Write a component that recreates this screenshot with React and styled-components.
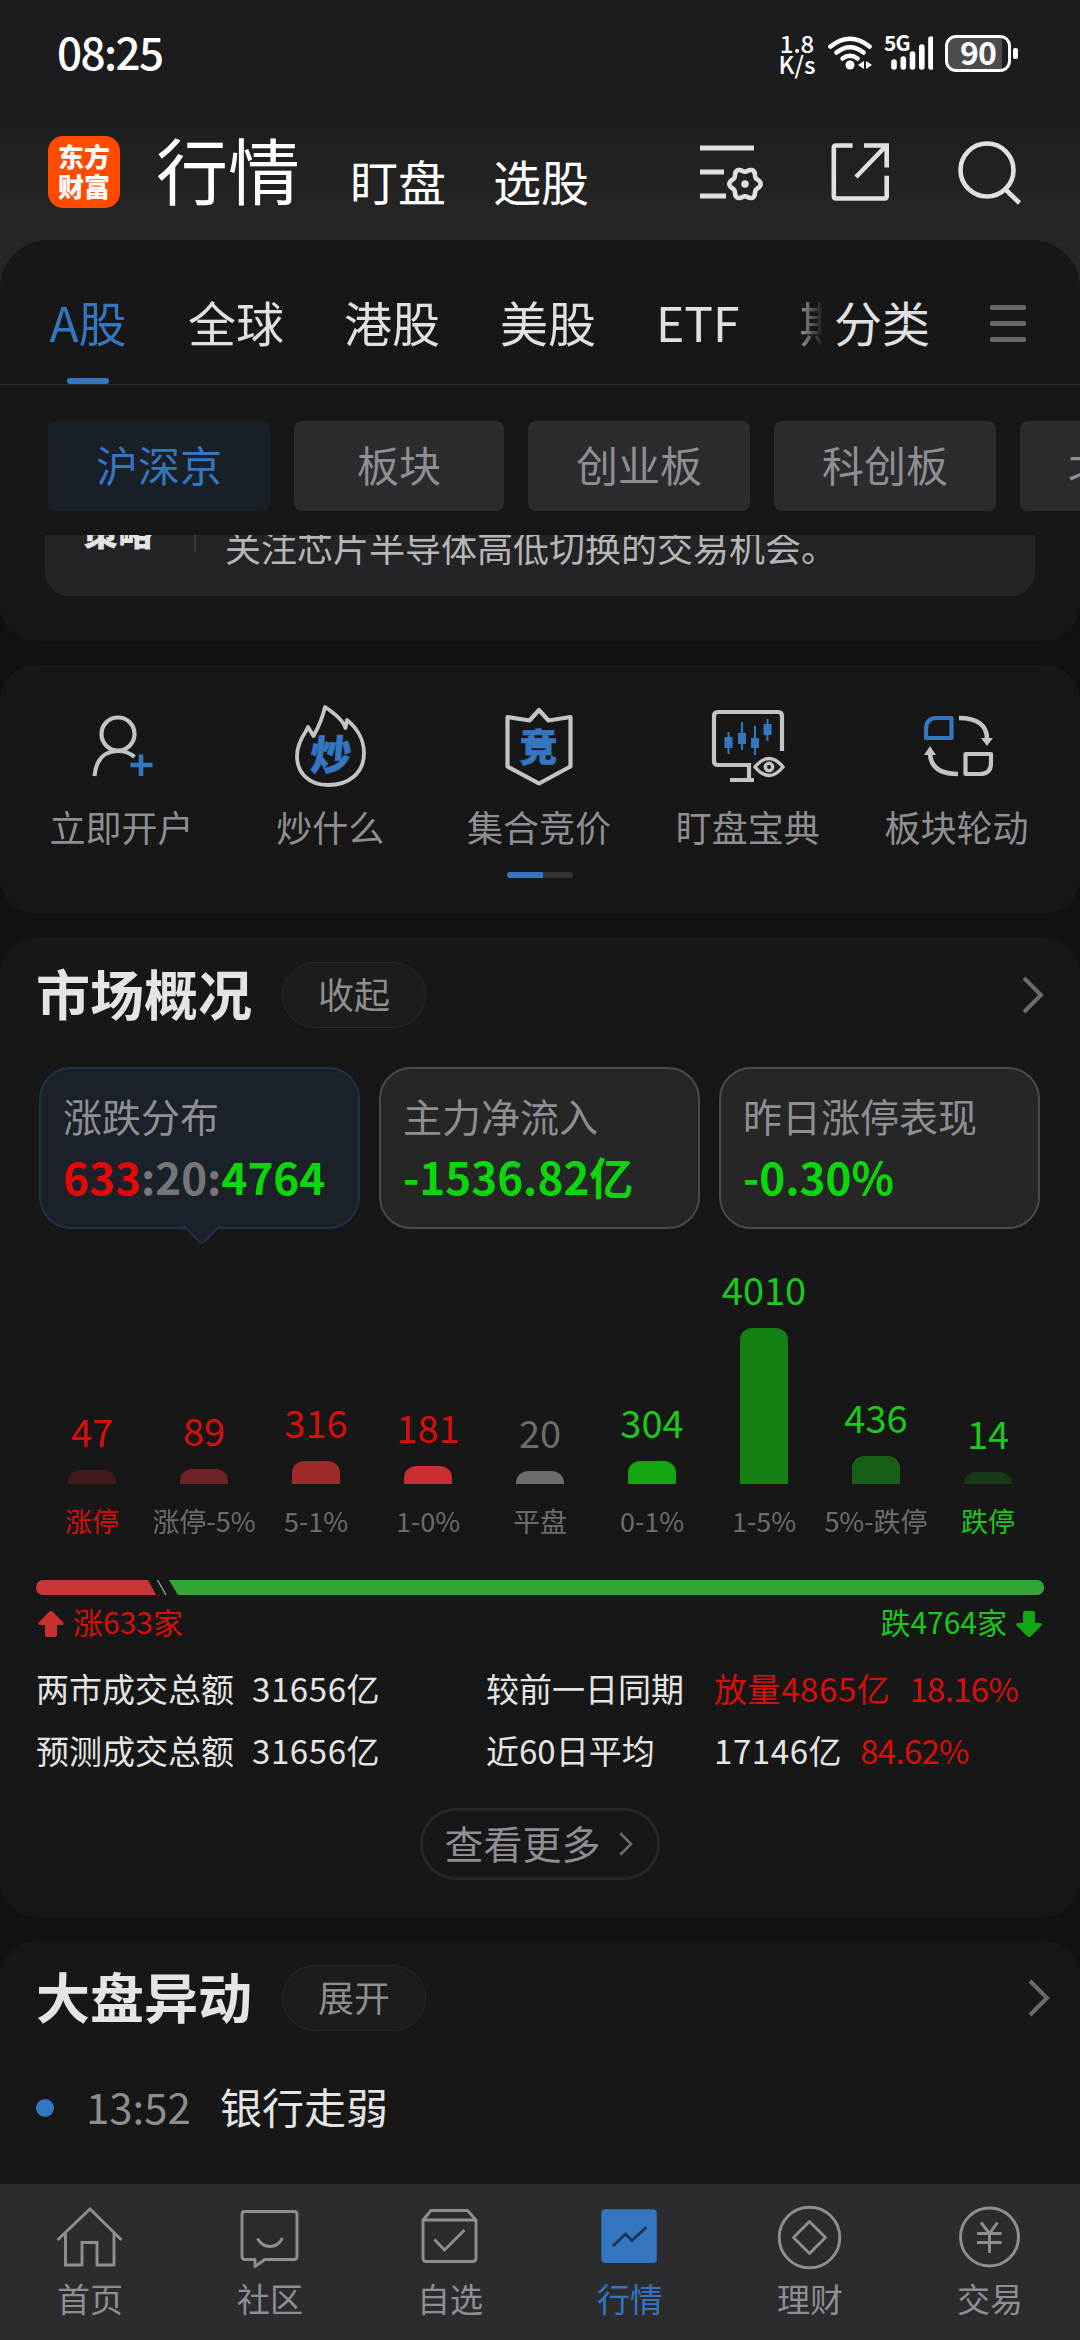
import React from 'react';
import styled, { createGlobalStyle } from 'styled-components';

const tabs = ['全球', '港股', '美股', 'ETF', '期货'];
const boards = ['沪深京', '板块', '创业板', '科创板', '北交所'];

const distribution = [
  { label: '涨停', value: 47, height: 14, bar: '#421b1c', tone: 'up', strong: true },
  { label: '涨停-5%', value: 89, height: 15, bar: '#6e2325', tone: 'up' },
  { label: '5-1%', value: 316, height: 23, bar: '#9d292a', tone: 'up' },
  { label: '1-0%', value: 181, height: 18, bar: '#ca2f31', tone: 'up' },
  { label: '平盘', value: 20, height: 13, bar: '#6c6c6c', tone: 'flat' },
  { label: '0-1%', value: 304, height: 23, bar: '#12a612', tone: 'down' },
  { label: '1-5%', value: 4010, height: 156, bar: '#158013', tone: 'down' },
  { label: '5%-跌停', value: 436, height: 28, bar: '#175f17', tone: 'down' },
  { label: '跌停', value: 14, height: 12, bar: '#173a17', tone: 'down', strong: true },
];

const tones = { up: '#d60f0d', down: '#1cc81c', flat: '#6c6c6c' };

const gearPath = (cx, cy) => {
  let d = '';
  for (let i = 0; i < 72; i++) {
    const a = (i / 72) * Math.PI * 2;
    const r = 14 + 1.7 * Math.cos(6 * a);
    d += `${i ? 'L' : 'M'}${(cx + r * Math.cos(a)).toFixed(2)} ${(cy + r * Math.sin(a)).toFixed(2)}`;
  }
  return d + 'Z';
};

const WifiIcon = () => (
  <svg width="46" height="38" viewBox="826 35 46 38" fill="none" stroke="#fff" strokeWidth="4.6" strokeLinecap="round">
    <path d="M829.5 47.5Q849 32 868.5 47.5" />
    <path d="M835.5 53.5Q849 43 862.5 53.5" />
    <path d="M841.5 59.5Q849 54 856.5 59.5" />
    <circle cx="849" cy="66" r="4.5" fill="#fff" stroke="none" />
    <path d="M863 62v8l-6-4zM865 62v8l6-4z" fill="#fff" stroke="none" />
  </svg>
);

const SignalIcon = () => (
  <svg width="42" height="36" viewBox="890 36 42 36" stroke="#fff" strokeWidth="5.6" strokeLinecap="round">
    <path d="M893 63v5M902.3 60v8M911.5 55v13M920.8 48v20M930 40v28" />
  </svg>
);

const FilterIcon = () => (
  <svg width="66" height="66" viewBox="697 139 66 66" fill="none" stroke="#e0e0e0" strokeWidth="5">
    <path d="M699 148h54M699 172h24M699 196h26" />
    <path d={gearPath(744, 184)} strokeWidth="4.6" strokeLinejoin="round" />
    <circle cx="744" cy="184" r="3.8" fill="#e0e0e0" stroke="none" />
  </svg>
);

const ShareIcon = () => (
  <svg width="60" height="62" viewBox="828 141 60 62" fill="none" stroke="#e0e0e0" strokeWidth="4.6">
    <path d="M850.6 145.5H834q-2.2 0-2.2 2.2V196q0 2.500 2.200 2.500h48.500q2.200 0 2.200-2.500V175.800" />
    <path d="M862 145.500h22.700v22M884 146L854 177" />
  </svg>
);

const SearchIcon = () => (
  <svg width="66" height="66" viewBox="956 138 66 66" fill="none" stroke="#e0e0e0" strokeWidth="4.6">
    <circle cx="987" cy="169" r="26.5" />
    <path d="M1005 188l14.5 14" />
  </svg>
);

const Chevron = ({ width = 22, height = 38, weight = 4 }) => (
  <svg width={width} height={height} viewBox="0 0 22 38" fill="none" stroke="#6b6b6b" strokeWidth={weight}>
    <path d="M2 2l17 17L2 36" />
  </svg>
);

const UserPlusIcon = () => (
  <svg width="90" height="90" viewBox="76 701 90 90" fill="none" stroke="#c4c4c4" strokeWidth="4.2">
    <circle cx="118" cy="734" r="16.500" />
    <path d="M94.500 776C96 759 105 751 118 751c7 0 12 2 16.500 6" />
    <path d="M141 754.500v21.500M130.500 765h22" stroke="#3476c0" strokeWidth="4.6" />
  </svg>
);

const FlameIcon = () => (
  <svg width="90" height="90" viewBox="285 701 90 90" fill="none" stroke="#c4c4c4" strokeWidth="3.8" strokeLinejoin="round">
    <path d="M325 707C337 715 344 723 345.500 728L347 720C357 728 364 740 364 753C364 773 349 785 328 785C309 785 297 773 297 756C297 746 302 737 306 731L308 727L313.500 736C318 728 322 720 325 707Z" />
    <text transform="translate(309 770) skewX(-5)" fontSize="41" fontWeight="900" fill="#3476c0" stroke="#3476c0" strokeWidth=".6">炒</text>
  </svg>
);

const ShieldIcon = () => (
  <svg width="90" height="90" viewBox="495 701 90 90" fill="none" stroke="#c4c4c4" strokeWidth="4.2" strokeLinejoin="round">
    <path d="M540 710l9.500 10.500L571.500 717v49.500L540 783.500l-31.500-17V717l22 3.500z" />
    <text x="520.500" y="761" fontSize="38" fontWeight="900" fill="#3476c0" stroke="#3476c0" strokeWidth=".6">竞</text>
  </svg>
);

const MonitorIcon = () => (
  <svg width="90" height="90" viewBox="704 701 90 90" fill="none" stroke="#c4c4c4" strokeWidth="4.2">
    <path d="M783 751V716q0-4-4-4H719q-4 0-4 4v45q0 4 4 4h31v14M731 780h24" />
    <path d="M729.500 732v22M743 722v28M756 726v29M768.500 719v22" stroke="#3476c0" strokeWidth="2" />
    <path d="M729.500 737v11M743 733v11M756 738v10M768.500 724v11" stroke="#3476c0" strokeWidth="8" />
    <path d="M756 767q7-8.500 14-8.500t14 8.500q-7 8.500-14 8.500t-14-8.500z" strokeWidth="3.4" />
    <circle cx="770" cy="767" r="3.7" strokeWidth="3.5" />
  </svg>
);

const RotateIcon = () => (
  <svg width="90" height="90" viewBox="912 701 90 90" fill="none" stroke="#c4c4c4" strokeWidth="4.2" strokeLinejoin="round">
    <path d="M926 738v-9q0-11 11-11h14.500v20z" stroke="#3476c0" />
    <path d="M965.500 754h25.500v9q0 11-11 11h-14.500z" />
    <path d="M959 718c18 0 28 7 28 21M958 774c-18 0-28-7-28-22" strokeWidth="4.6" />
    <path d="M981 738h12l-6 8zM924 755h12l-6-9z" fill="#c4c4c4" stroke="none" />
  </svg>
);

const shortcuts = [
  { label: '立即开户', Icon: UserPlusIcon },
  { label: '炒什么', Icon: FlameIcon },
  { label: '集合竞价', Icon: ShieldIcon },
  { label: '盯盘宝典', Icon: MonitorIcon },
  { label: '板块轮动', Icon: RotateIcon },
];

const navItems = [
  { label: '首页', shape: <path d="M3.500 40L36 9l31.500 31M11.500 33v32H28V42.500h15V65h17V33" /> },
  {
    label: '社区',
    shape: (
      <>
        <path d="M11 11.500h49q3 0 3 3v42q0 3-3 3H31L21 66.500V59.500H11q-3 0-3-3v-42q0-3 3-3z" strokeLinejoin="round" />
        <path d="M23.500 38.500q4.500 8 12.500 8t12.500-8.500" />
      </>
    ),
  },
  {
    label: '自选',
    shape: <path d="M9 20l8-9.500h36.500L62 20v38q0 3.500-3.500 3.500h-46Q9 61.500 9 58V20h53M20.500 39.500L30.500 50 50.500 30" />,
  },
  {
    label: '行情',
    active: true,
    shape: (
      <>
        <rect x="7.3" y="9.3" width="55.5" height="53.7" rx="4" fill="#3476c0" stroke="none" />
        <path d="M19 46l12.500-12 6.500 6.500L52.500 27" stroke="#1f3550" />
      </>
    ),
  },
  {
    label: '理财',
    shape: (
      <>
        <circle cx="35.5" cy="37.5" r="30.3" />
        <path d="M35.500 21.500l16 16-16 16-16-16z" strokeLinejoin="round" />
      </>
    ),
  },
  {
    label: '交易',
    shape: (
      <>
        <circle cx="35.5" cy="37" r="29" />
        <path d="M27 22.500l8.500 11L43.500 22.500M35.500 33v20M23 33.500h24.500M23 42.500h24.500" />
      </>
    ),
  },
];

const SectionHead = ({ title, action, inset }) => (
  <SectionHeader $inset={inset}>
    <SectionTitle>{title}</SectionTitle>
    <Pill>{action}</Pill>
    <Chevron />
  </SectionHeader>
);

const App = () => {
  return (
    <Page>
      <GlobalStyle />
      <Header>
        <StatusBar>
          <Clock>08:25</Clock>
          <NetSpeed>
            <span>1.8</span>
            <span>K/s</span>
          </NetSpeed>
          <WifiIcon />
          <Signal>
            <NetType>5G</NetType>
            <SignalIcon />
          </Signal>
          <Battery>
            <BatteryBody>90</BatteryBody>
            <BatteryCap />
          </Battery>
        </StatusBar>
        <TitleBar>
          <Logo>
            <span>东方</span>
            <span>财富</span>
          </Logo>
          <Modes>
            <Mode $active>行情</Mode>
            <Mode>盯盘</Mode>
            <Mode>选股</Mode>
          </Modes>
          <Tools>
            <FilterIcon />
            <ShareIcon />
            <SearchIcon />
          </Tools>
        </TitleBar>
      </Header>

      <MarketPanel>
        <TabBar>
          <TabList>
            <Tab $active>A股</Tab>
            {tabs.map(tab => (
              <Tab key={tab}>{tab}</Tab>
            ))}
          </TabList>
          <Category>分类</Category>
          <MenuButton>
            <i />
            <i />
            <i />
          </MenuButton>
        </TabBar>
        <BoardList>
          {boards.map((board, i) => (
            <Board key={board} $active={i === 0}>
              {board}
            </Board>
          ))}
        </BoardList>
        <TipClip>
          <Tip>
            <TipTitle>策略</TipTitle>
            <TipText>关注芯片半导体高低切换的交易机会。</TipText>
          </Tip>
        </TipClip>
      </MarketPanel>

      <Card $height={249}>
        <Shortcuts>
          {shortcuts.map(({ label, Icon }) => (
            <Shortcut key={label}>
              <Icon />
              <span>{label}</span>
            </Shortcut>
          ))}
        </Shortcuts>
        <Pager />
      </Card>

      <Card $height={979}>
        <SectionHead title="市场概况" action="收起" inset={36} />
        <Summary>
          <SummaryBox $active>
            <h4>涨跌分布</h4>
            <p>
              <Num $color="#e60808">633</Num>
              <Num $color="#767678">:20:</Num>
              <Num>4764</Num>
            </p>
          </SummaryBox>
          <SummaryBox>
            <h4>主力净流入</h4>
            <p>
              <Num>-1536.82亿</Num>
            </p>
          </SummaryBox>
          <SummaryBox>
            <h4>昨日涨停表现</h4>
            <p>
              <Num>-0.30%</Num>
            </p>
          </SummaryBox>
        </Summary>
        <Chart>
          {distribution.map(d => (
            <ChartColumn key={d.label}>
              <ChartValue $color={tones[d.tone]}>{d.value}</ChartValue>
              <ChartBar style={{ height: d.height, background: d.bar }} />
              <ChartLabel $color={d.strong ? tones[d.tone] : '#6c6c6c'}>{d.label}</ChartLabel>
            </ChartColumn>
          ))}
        </Chart>
        <RatioBar>
          <RatioUp />
          <svg width="12" height="15" viewBox="0 0 12 15" stroke="#9a9a9a" strokeWidth="1.4">
            <path d="M1.500 0l8.500 15" />
          </svg>
          <RatioDown />
        </RatioBar>
        <RatioLegend>
          <Legend $color="#d60f0d">
            <svg width="26" height="26" viewBox="0 0 26 26" fill="#ca2f31">
              <path d="M11.500.6q1.500-1.200 3 0L25.500 11.500q1 2-1 2.500H19v10q0 2-2 2H9q-2 0-2-2V14H1.500q-2-.5-1-2.500z" />
            </svg>
            涨633家
          </Legend>
          <Legend $color="#1cc81c">
            跌4764家
            <svg width="26" height="26" viewBox="0 0 26 26" fill="#12a612">
              <path d="M11.500 25.400q1.500 1.200 3 0L25.500 14.500q1-2-1-2.500H19V2q0-2-2-2H9Q7 0 7 2v10H1.500q-2 .5-1 2.500z" />
            </svg>
          </Legend>
        </RatioLegend>
        <Turnover>
          <span>两市成交总额</span>
          <Amount>31656亿</Amount>
          <span>较前一日同期</span>
          <Change $gap={19}>
            <Amount $up>放量4865亿</Amount>
            <Percent>18.16%</Percent>
          </Change>
          <span>预测成交总额</span>
          <Amount>31656亿</Amount>
          <span>近60日平均</span>
          <Change $gap={18}>
            <Amount>17146亿</Amount>
            <Percent>84.62%</Percent>
          </Change>
        </Turnover>
        <MoreButton>
          查看更多
          <Chevron width={14} height={24} weight={4} />
        </MoreButton>
      </Card>

      <Card $open>
        <SectionHead title="大盘异动" action="展开" inset={30} />
        <NewsRow>
          <Dot />
          <time>13:52</time>
          <span>银行走弱</span>
        </NewsRow>
      </Card>

      <BottomNav>
        {navItems.map(item => (
          <NavItem key={item.label} $active={item.active}>
            <svg width="72" height="72" viewBox="0 0 72 72" fill="none" stroke="currentColor" strokeWidth="2.9">
              {item.shape}
            </svg>
            <span>{item.label}</span>
          </NavItem>
        ))}
      </BottomNav>
    </Page>
  );
};

export default App;

const GlobalStyle = createGlobalStyle`
  * {
    box-sizing: border-box;
  }
  body {
    margin: 0;
    background: #111111;
    font-family: 'Noto Sans CJK SC', sans-serif;
  }
  h2, h4, p {
    margin: 0;
  }
  svg {
    display: block;
    flex-shrink: 0;
  }
`;

const Page = styled.div`
  width: 1080px;
  height: 2340px;
  overflow: hidden;
  display: flex;
  flex-direction: column;
  background: #111111;
  color: #e4e4e4;
  line-height: 1;
  white-space: nowrap;
`;

const Header = styled.header`
  height: 288px;
  margin-bottom: -48px;
  flex-shrink: 0;
  background: linear-gradient(#1c1c1e 105px, #262626 225px);
  color: #fff;
`;

const StatusBar = styled.div`
  height: 104px;
  padding: 2px 62px 0 57px;
  display: flex;
  align-items: center;
`;

const Clock = styled.div`
  font-size: 44px;
  font-weight: 500;
  letter-spacing: -1.6px;
  margin: -4px auto 0 0;
`;

const NetSpeed = styled.div`
  display: flex;
  flex-direction: column;
  align-items: center;
  width: 36px;
  margin: -1px 12px 0 0;
  font-size: 24px;
  font-weight: 500;
  line-height: 21px;
`;

const Signal = styled.div`
  display: flex;
  margin-left: 11px;
`;

const NetType = styled.span`
  width: 24px;
  margin: -3px -17px 0 0;
  font-size: 21px;
  font-weight: 700;
  letter-spacing: -1px;
`;

const Battery = styled.div`
  display: flex;
  align-items: center;
  margin-left: 12px;
`;

const BatteryBody = styled.div`
  width: 66px;
  height: 37px;
  padding-bottom: 4px;
  display: flex;
  align-items: center;
  justify-content: center;
  border: 3px solid #fff;
  border-radius: 11px;
  background: linear-gradient(90deg, #4b4b4d 54px, transparent 54px);
  font-size: 32px;
  font-weight: 700;
  letter-spacing: -1px;
`;

const BatteryCap = styled.div`
  width: 5px;
  height: 11px;
  margin-left: 2px;
  border-radius: 2px;
  background: #fff;
`;

const TitleBar = styled.div`
  height: 136px;
  padding: 0 58px 0 48px;
  display: flex;
  align-items: center;
`;

const Logo = styled.div`
  width: 72px;
  height: 72px;
  padding-bottom: 3px;
  display: flex;
  flex-direction: column;
  align-items: center;
  justify-content: center;
  border-radius: 15px;
  background: #ff4a00;
  font-size: 26px;
  font-weight: 900;
  line-height: 30px;
`;

const Modes = styled.nav`
  display: flex;
  align-items: flex-end;
  align-self: flex-end;
  gap: 47px;
  margin: 0 0 36px 36px;
`;

const Mode = styled.span`
  font-size: ${({ $active }) => ($active ? 72 : 48)}px;
  min-width: ${({ $active }) => ($active ? 147 : 96)}px;
  font-weight: 400;
`;

const Tools = styled.div`
  display: flex;
  align-items: center;
  gap: 66px;
  margin-left: auto;
`;

const MarketPanel = styled.section`
  height: 401px;
  flex-shrink: 0;
  margin-bottom: 24px;
  border-radius: 48px 48px 36px 36px;
  background: #171717;
`;

const TabBar = styled.div`
  height: 145px;
  display: flex;
  align-items: center;
  border-bottom: 1px solid #2b2b2c;
  padding: 0 54px 0 48px;
  font-size: 48px;
`;

const TabList = styled.div`
  width: 774px;
  height: 144px;
  overflow: hidden;
  display: flex;
  gap: 60px;
  mask-image: linear-gradient(90deg, #000 738px, transparent 776px);
`;

const Tab = styled.div`
  height: 144px;
  padding-top: 57px;
  min-width: 80px;
  display: flex;
  flex-direction: column;
  justify-content: space-between;
  align-items: center;
  flex-shrink: 0;
  color: ${({ $active }) => ($active ? '#3476c0' : '#e0e0e0')};
  &::after {
    content: '';
    width: 42px;
    height: 6px;
    border-radius: 3px;
    background: ${({ $active }) => ($active ? '#3476c0' : 'transparent')};
  }
`;

const Category = styled.div`
  height: 144px;
  padding-top: 57px;
  margin: 0 auto 0 12px;
  color: #e0e0e0;
`;

const MenuButton = styled.div`
  width: 36px;
  margin-top: 23px;
  display: flex;
  flex-direction: column;
  gap: 11px;
  i {
    height: 5px;
    border-radius: 2px;
    background: #666;
  }
`;

const BoardList = styled.div`
  height: 150px;
  padding: 36px 0 0 48px;
  display: flex;
  gap: 24px;
  overflow: hidden;
`;

const Board = styled.div`
  min-width: 210px;
  height: 90px;
  padding: 0 48px 4px;
  display: flex;
  align-items: center;
  justify-content: center;
  flex-shrink: 0;
  border-radius: 8px;
  background: ${({ $active }) => ($active ? '#1a2028' : '#2c2c2e')};
  color: ${({ $active }) => ($active ? '#3476c0' : '#8e8e93')};
  font-size: 42px;
`;

/* the tip card is scrolled partly under the board list */
const TipClip = styled.div`
  height: 61px;
  margin: 0 45px;
  overflow: hidden;
  display: flex;
  align-items: flex-end;
`;

const Tip = styled.div`
  flex: 1;
  height: 150px;
  padding: 82px 0 0 38px;
  display: flex;
  border-radius: 24px;
  background: #242426;
`;

const TipTitle = styled.div`
  width: 113px;
  height: 24px;
  margin-right: 29px;
  border-right: 2px solid #3a3a3c;
  color: #e4e4e4;
  font-size: 35px;
  font-weight: 900;
  line-height: 5px;
`;

const TipText = styled.div`
  font-size: 36px;
  color: #b6b6b6;
`;

const Card = styled.section`
  height: ${({ $height }) => ($height ? `${$height}px` : 'auto')};
  flex: ${({ $open }) => ($open ? '1' : '0 0 auto')};
  margin-bottom: ${({ $open }) => ($open ? 0 : 24)}px;
  border-radius: ${({ $open }) => ($open ? '36px 36px 0 0' : '36px')};
  background: #171717;
  overflow: hidden;
`;

const Shortcuts = styled.div`
  display: flex;
  padding: 36px 19px 0 17px;
`;

const Shortcut = styled.div`
  flex: 1;
  display: flex;
  flex-direction: column;
  align-items: center;
  gap: 17px;
  color: #8e8e93;
  font-size: 36px;
`;

const Pager = styled.div`
  width: 66px;
  height: 6px;
  margin: 28px auto 0;
  border-radius: 3px;
  background: linear-gradient(90deg, #3476c0 36px, #333333 36px);
`;

const SectionHeader = styled.div`
  height: 114px;
  padding: 0 ${({ $inset }) => $inset}px 0 36px;
  display: flex;
  align-items: center;
  > svg {
    margin-left: auto;
  }
`;

const SectionTitle = styled.h2`
  width: 216px;
  margin-top: -5px;
  font-size: 54px;
  font-weight: 700;
`;

const Pill = styled.div`
  width: 144px;
  height: 66px;
  margin-left: 30px;
  padding-bottom: 4px;
  display: flex;
  align-items: center;
  justify-content: center;
  border: 1px solid #2a2a2b;
  border-radius: 33px;
  background: #1c1c1c;
  color: #8e8e8e;
  font-size: 36px;
`;

const Summary = styled.div`
  display: grid;
  grid-template-columns: repeat(3, 321px);
  gap: 19px;
  padding: 15px 39px 0;
`;

const SummaryBox = styled.div`
  position: relative;
  height: 162px;
  padding: 27px 0 0 22px;
  border: 2px solid ${({ $active }) => ($active ? '#20324a' : '#4a4a4a')};
  border-radius: 32px;
  background: ${({ $active }) => ($active ? '#1b2129' : '#262626')};
  h4 {
    color: #8e8e93;
    font-size: 39px;
    font-weight: 400;
  }
  p {
    margin-top: 19px;
    display: flex;
    font-size: 44px;
  }
  &::after {
    content: '';
    display: ${({ $active }) => ($active ? 'block' : 'none')};
    position: absolute;
    left: 147px;
    bottom: -13px;
    width: 26px;
    height: 26px;
    background: #1b2129;
    border: solid #20324a;
    border-width: 0 2px 2px 0;
    border-bottom-right-radius: 5px;
    transform: rotate(45deg);
  }
`;

const Num = styled.span`
  color: ${({ $color }) => $color || '#0bd60b'};
  font-weight: 700;
`;

const Chart = styled.div`
  height: 313px;
  padding: 0 36px;
  display: grid;
  grid-template-columns: repeat(9, 112px);
  align-items: end;
`;

const ChartColumn = styled.div`
  display: flex;
  flex-direction: column;
  align-items: center;
`;

const ChartValue = styled.div`
  margin-bottom: 20px;
  color: ${({ $color }) => $color};
  font-size: 38px;
`;

const ChartBar = styled.div`
  width: 48px;
  border-radius: 12px 12px 0 0;
`;

const ChartLabel = styled.div`
  height: 58px;
  padding-top: 23px;
  color: ${({ $color }) => $color};
  font-size: 27px;
`;

const RatioBar = styled.div`
  display: flex;
  height: 15px;
  margin: 38px 36px 0;
`;

const RatioUp = styled.div`
  width: 120px;
  border-radius: 7px 0 0 7px;
  background: #c63838;
  clip-path: polygon(0 0, 112px 0, 120px 100%, 0 100%);
`;

const RatioDown = styled.div`
  flex: 1;
  margin-left: 1px;
  border-radius: 0 7px 7px 0;
  background: #34a634;
  clip-path: polygon(0 0, 100% 0, 100% 100%, 9px 100%);
`;

const RatioLegend = styled.div`
  display: flex;
  justify-content: space-between;
  padding: 7px 38px 3px;
`;

const Legend = styled.div`
  height: 38px;
  display: flex;
  align-items: center;
  gap: 9px;
  color: ${({ $color }) => $color};
  font-size: 30px;
  line-height: 34px;
  svg {
    margin-top: 6px;
  }
`;

const Turnover = styled.div`
  display: grid;
  grid-template-columns: 216px 234px 228px auto;
  row-gap: 29px;
  padding: 29px 0 0 36px;
  font-size: 33px;
`;

const Amount = styled.span`
  color: ${({ $up }) => ($up ? '#d60f0d' : 'inherit')};
  letter-spacing: 0.6px;
`;

const Percent = styled.span`
  color: #d60f0d;
  letter-spacing: -0.7px;
`;

const Change = styled.div`
  display: flex;
  gap: ${({ $gap }) => $gap}px;
`;

const MoreButton = styled.div`
  width: 240px;
  height: 72px;
  margin: 41px auto 0;
  padding: 0 3px 4px 0;
  display: flex;
  align-items: center;
  justify-content: center;
  gap: 18px;
  border: 3px solid #272727;
  border-radius: 36px;
  color: #8e8e93;
  font-size: 39px;
  svg {
    margin-top: 4px;
  }
`;

const NewsRow = styled.div`
  display: flex;
  align-items: center;
  padding: 30px 36px 0;
  font-size: 42px;
  time {
    width: 134px;
    margin-left: 32px;
    color: #8e8e8e;
  }
`;

const Dot = styled.i`
  width: 18px;
  height: 18px;
  margin-top: 3px;
  border-radius: 50%;
  background: #3476c0;
`;

const BottomNav = styled.nav`
  height: 156px;
  flex-shrink: 0;
  display: flex;
  padding-top: 16px;
  background: #2c2c2e;
`;

const NavItem = styled.div`
  flex: 1;
  display: flex;
  flex-direction: column;
  align-items: center;
  gap: 10px;
  color: ${({ $active }) => ($active ? '#3476c0' : '#8e8e93')};
  font-size: 33px;
`;
